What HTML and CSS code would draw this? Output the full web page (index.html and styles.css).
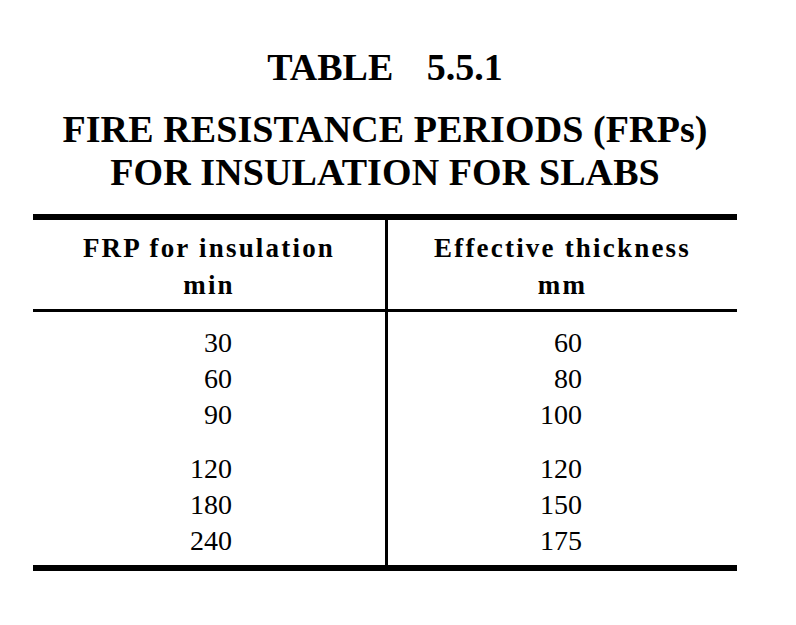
FILE: index.html
```html
<!DOCTYPE html>
<html lang="en">
<head>
<meta charset="utf-8">
<title>Table 5.5.1</title>
<link rel="stylesheet" href="styles.css">
</head>
<body>
<div class="page">
  <h1 class="table-no">TABLE 5.5.1</h1>
  <h2 class="caption">FIRE RESISTANCE PERIODS (FRPs)<br>FOR INSULATION FOR SLABS</h2>
  <div class="tbl">
    <div class="row head">
      <div class="cell left">FRP for insulation<br>min</div>
      <div class="cell right">Effective thickness<br>mm</div>
    </div>
    <div class="row body">
      <div class="cell left">
        <div>30</div><div>60</div><div>90</div>
        <div class="gap"></div>
        <div>120</div><div>180</div><div>240</div>
      </div>
      <div class="cell right">
        <div>60</div><div>80</div><div>100</div>
        <div class="gap"></div>
        <div>120</div><div>150</div><div>175</div>
      </div>
    </div>
  </div>
</div>
</body>
</html>
```
FILE: styles.css
```css
html, body {
  margin: 0;
  padding: 0;
  background: #fff;
}
body {
  font-family: "Liberation Serif", "Times New Roman", serif;
  color: #000;
}
.page {
  width: 704px;
  margin-left: 33px;
}
.table-no {
  margin: 46px 0 0;
  font-size: 38px;
  line-height: 43px;
  font-weight: bold;
  text-align: center;
  word-spacing: 24px;
}
.caption {
  margin: 19px 0 0;
  font-size: 38px;
  line-height: 43px;
  font-weight: bold;
  text-align: center;
  letter-spacing: 0.1px;
}
.tbl {
  margin-top: 20px;
  border-top: 6px solid #000;
  border-bottom: 6px solid #000;
}
.row {
  display: grid;
  grid-template-columns: 355px 1fr;
}
.cell.left {
  border-right: 3px solid #000;
}
.head {
  border-bottom: 3px solid #000;
}
.head .cell {
  padding: 10px 0 5px;
  font-size: 27px;
  line-height: 37px;
  font-weight: bold;
  text-align: center;
  letter-spacing: 2.2px;
}
.body .cell {
  padding: 12.5px 0 6.5px;
  font-size: 28px;
  line-height: 36px;
  text-align: right;
}
.body .cell.left {
  padding-right: 153px;
}
.body .cell.right {
  padding-right: 155px;
}
.gap {
  height: 18px;
}
```
